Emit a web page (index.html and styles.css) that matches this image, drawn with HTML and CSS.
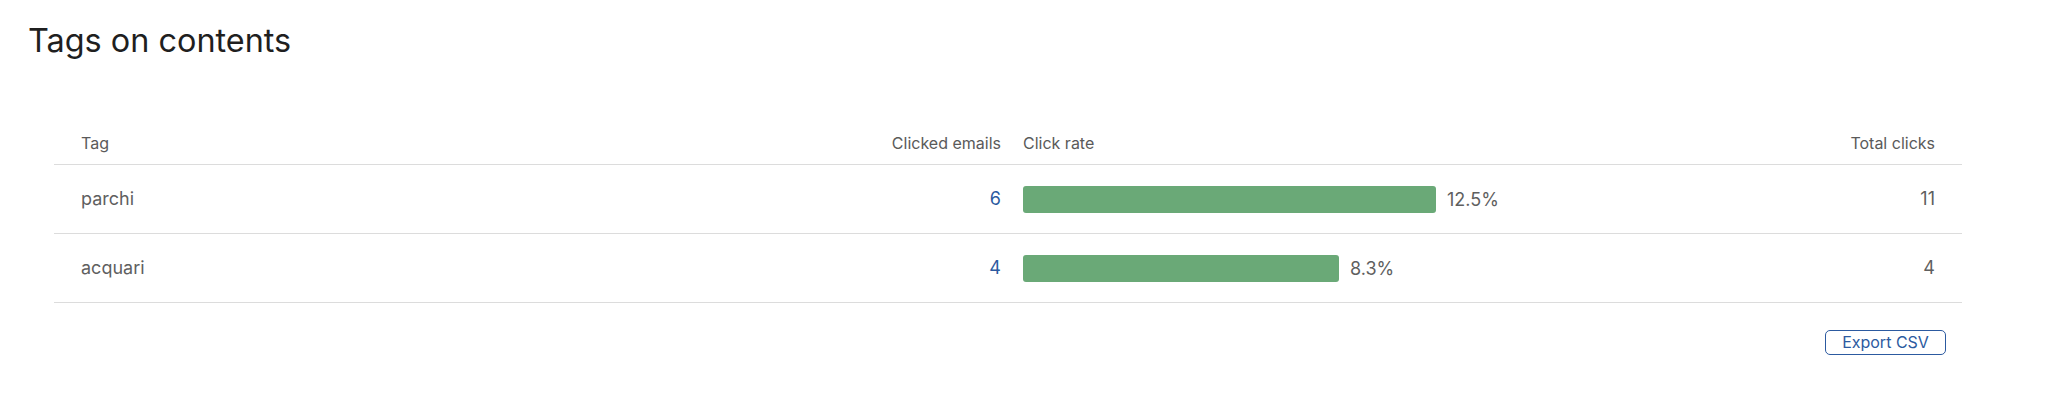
FILE: index.html
```html
<!DOCTYPE html>
<html lang="en">
<head>
<meta charset="utf-8">
<title>Tags on contents</title>
<link rel="stylesheet" href="styles.css">
</head>
<body>
<div class="page">
  <h1 class="title">Tags on contents</h1>
  <div class="table">
    <div class="row head">
      <div class="cell">Tag</div>
      <div class="cell num">Clicked emails</div>
      <div class="cell">Click rate</div>
      <div class="cell num">Total clicks</div>
    </div>
    <div class="row">
      <div class="cell">parchi</div>
      <div class="cell num link">6</div>
      <div class="cell rate"><span class="bar" style="width:413px"></span><span class="pct">12.5%</span></div>
      <div class="cell num">11</div>
    </div>
    <div class="row">
      <div class="cell">acquari</div>
      <div class="cell num link">4</div>
      <div class="cell rate"><span class="bar" style="width:316px"></span><span class="pct">8.3%</span></div>
      <div class="cell num">4</div>
    </div>
  </div>
  <div class="actions">
    <button class="btn">Export CSV</button>
  </div>
</div>
</body>
</html>
```

FILE: styles.css
```css
html, body {
  margin: 0;
  padding: 0;
  background: #fff;
}
body {
  font-family: Inter, "Noto Sans", sans-serif;
  color: #222;
}
.page {
  padding: 21px 84px 0 28px;
}
.title {
  margin: 0;
  font-size: 32.4px;
  font-weight: 400;
  line-height: 40px;
  color: #1f1f1f;
}
.table {
  margin: 62px 0 0 26px;
}
.row {
  display: grid;
  grid-template-columns: 600px 298px 700px 1fr;
  column-gap: 22px;
  align-items: center;
  padding: 0 27px 2px;
  height: 69px;
  box-sizing: border-box;
  border-bottom: 1px solid #dcdcdc;
  font-size: 18px;
  color: #5f5f5f;
}
.row.head {
  height: 42px;
  font-size: 16px;
  color: #5a5a5a;
}
.row .rate {
  margin-top: 2px;
}
.num {
  text-align: right;
}
.link {
  color: #2c5aa0;
}
.rate {
  display: flex;
  align-items: center;
  gap: 11px;
}
.bar {
  display: block;
  height: 27px;
  background: #6aa977;
  border-radius: 3px;
}
.actions {
  display: flex;
  justify-content: flex-end;
  padding: 27px 16px 0 0;
}
.btn {
  font-family: Inter, "Noto Sans", sans-serif;
  font-size: 16px;
  color: #2c5aa0;
  background: #fff;
  border: 1px solid #2c5aa0;
  border-radius: 5px;
  width: 121px;
  height: 25px;
  padding: 0;
  line-height: 23px;
}
```
